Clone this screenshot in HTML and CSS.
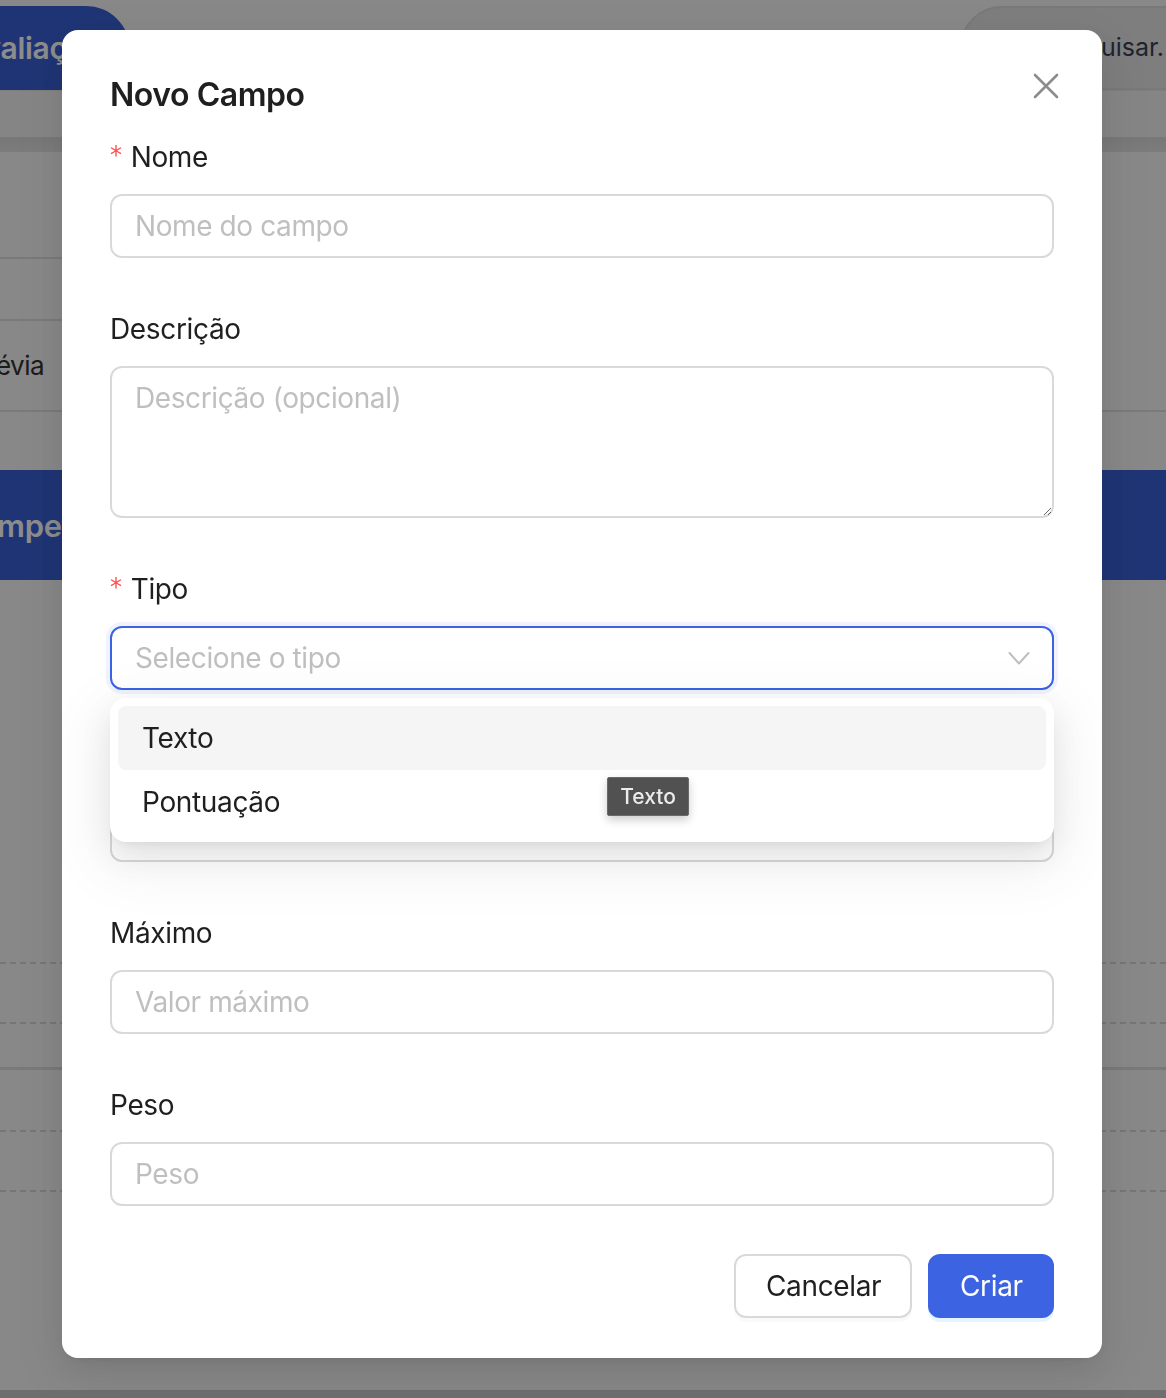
FILE: index.html
```html
<!DOCTYPE html>
<html lang="pt-BR">
<head>
<meta charset="utf-8">
<title>Novo Campo</title>
<link rel="stylesheet" href="styles.css">
</head>
<body>
<div class="app">
  <header class="topbar">
    <div class="tab">Avaliações</div>
    <div class="search">Pesquisar...</div>
  </header>
  <div class="subbar"></div>
  <div class="shadowband"></div>
  <section class="section1">
    <nav class="sidenav">
      <div class="nav-item nav-item-tall"></div>
      <div class="nav-item nav-item-short"></div>
      <div class="nav-item nav-item-text"><span class="nav-text">Prévia</span></div>
    </nav>
    <div class="section-main"></div>
  </section>
  <div class="band"><span class="band-text">Competências</span></div>
  <div class="table">
    <div class="trow trow-dashed"></div>
    <div class="trow trow-dashed trow-solid-bottom"></div>
    <div class="trow trow-dashed-top"></div>
    <div class="trow trow-dashed"></div>
    <div class="trow-fill"></div>
  </div>
  <div class="bottomstrip"></div>
</div>

<div class="mask"></div>

<div class="modal-wrap">
  <div class="modal">
    <button class="close" type="button" aria-label="Fechar">
      <svg width="26" height="26" viewBox="0 0 26 26"><path d="M2 2 L24 24 M24 2 L2 24" stroke="#8c8c8c" stroke-width="2.6" stroke-linecap="round" fill="none"/></svg>
    </button>
    <div class="modal-title">Novo Campo</div>
    <form class="form">
      <div class="field">
        <label class="label required">Nome</label>
        <input class="input" type="text" placeholder="Nome do campo">
      </div>
      <div class="field">
        <label class="label">Descrição</label>
        <textarea class="textarea" placeholder="Descrição (opcional)"></textarea>
      </div>
      <div class="field">
        <label class="label required">Tipo</label>
        <div class="select-wrap">
          <div class="select">
            <span class="select-ph">Selecione o tipo</span>
            <svg class="chevron" width="22" height="16" viewBox="0 0 22 16"><polyline points="1.5,3 11,13.5 20.5,3" fill="none" stroke="#bfbfbf" stroke-width="2" stroke-linecap="round" stroke-linejoin="round"/></svg>
          </div>
          <div class="dropdown">
            <div class="option option-active">Texto</div>
            <div class="option">Pontuação</div>
            <div class="tooltip">Texto</div>
          </div>
        </div>
      </div>
      <div class="field">
        <label class="label">Mínimo</label>
        <input class="input" type="text" placeholder="Valor mínimo">
      </div>
      <div class="field">
        <label class="label">Máximo</label>
        <input class="input" type="text" placeholder="Valor máximo">
      </div>
      <div class="field">
        <label class="label">Peso</label>
        <input class="input" type="text" placeholder="Peso">
      </div>
    </form>
    <div class="footer">
      <button class="btn btn-default" type="button">Cancelar</button>
      <button class="btn btn-primary" type="button">Criar</button>
    </div>
  </div>
</div>
</body>
</html>
```

FILE: styles.css
```css
* { box-sizing: border-box; }

html, body {
  margin: 0;
  height: 1398px;
  overflow: hidden;
}

body {
  font-family: Inter, "Noto Sans", "Liberation Sans", sans-serif;
  background: #f7f7f7;
  color: #1f1f1f;
}

/* ---------- background page ---------- */
.app {
  height: 1398px;
  display: flex;
  flex-direction: column;
  background: #f7f7f7;
  overflow: hidden;
}

.topbar {
  height: 90px;
  display: flex;
  justify-content: space-between;
  align-items: flex-end;
  flex-shrink: 0;
}

.tab {
  height: 84px;
  width: 196px;
  margin-left: -66px;
  padding-left: 30px;
  background: #3860d5;
  border-radius: 0 44px 0 0;
  color: #ffffff;
  font-size: 30px;
  font-weight: 600;
  letter-spacing: -0.3px;
  line-height: 84px;
  white-space: nowrap;
  overflow: hidden;
}

.search {
  height: 84px;
  width: 320px;
  margin-right: -114px;
  padding-left: 80px;
  background: #e6e6e6;
  border: 2px solid #dcdcdc;
  border-radius: 44px 0 0 44px;
  color: #374157;
  font-size: 25px;
  line-height: 78px;
  white-space: nowrap;
  overflow: hidden;
}

.subbar {
  height: 47px;
  flex-shrink: 0;
  background: #f3f3f3;
  border-top: 1px solid #e6e6e6;
}

.shadowband {
  height: 15px;
  flex-shrink: 0;
  background: linear-gradient(#dadada, #e2e2e2);
}

.section1 {
  height: 260px;
  flex-shrink: 0;
  display: grid;
  grid-template-columns: 340px 1fr;
  border-bottom: 2px solid #dedede;
}

.sidenav {
  display: flex;
  flex-direction: column;
}

.nav-item-tall {
  height: 107px;
  border-bottom: 2px solid #dedede;
}

.nav-item-short {
  height: 62px;
  border-bottom: 2px solid #dedede;
}

.nav-item-text {
  flex: 1;
  display: flex;
  align-items: center;
}

.nav-text {
  margin-left: -29px;
  font-size: 26px;
  letter-spacing: -0.5px;
  color: #333333;
}

.band {
  margin-top: 58px;
  height: 110px;
  flex-shrink: 0;
  background: #3860d5;
  display: flex;
  align-items: center;
}

.band-text {
  margin-left: -44px;
  font-size: 31px;
  font-weight: 600;
  letter-spacing: -0.3px;
  color: #ffffff;
}

.table {
  margin-top: 382px;
  flex: 1;
  display: flex;
  flex-direction: column;
}

.trow {
  height: 60px;
  flex-shrink: 0;
}

.trow-dashed {
  border-top: 2px dashed #d6d6d6;
}

.trow-solid-bottom {
  height: 48px;
  border-bottom: 3px solid #dcdcdc;
}

.trow-dashed-top {
  height: 60px;
}

.trow-dashed-top + .trow-dashed {
  height: 62px;
  border-bottom: 2px dashed #d6d6d6;
}

.trow-fill {
  flex: 1;
}

.bottomstrip {
  height: 8px;
  flex-shrink: 0;
  background: #c9c9c9;
}

/* ---------- overlay ---------- */
.mask {
  position: fixed;
  inset: 0;
  background: rgba(0, 0, 0, 0.45);
}

.modal-wrap {
  position: fixed;
  inset: 0;
  display: flex;
  justify-content: center;
  align-items: flex-start;
  padding-top: 30px;
  padding-right: 2px;
}

.modal {
  position: relative;
  width: 1040px;
  background: #ffffff;
  border-radius: 16px;
  padding: 40px 48px;
  box-shadow: 0 12px 32px 0 rgba(0, 0, 0, 0.08), 0 6px 12px -8px rgba(0, 0, 0, 0.12), 0 18px 56px 16px rgba(0, 0, 0, 0.05);
}

.close {
  position: absolute;
  top: 34px;
  right: 34px;
  width: 44px;
  height: 44px;
  padding: 0;
  border: 0;
  background: transparent;
  display: flex;
  align-items: center;
  justify-content: center;
  cursor: pointer;
}

.modal-title {
  font-size: 32px;
  font-weight: 600;
  letter-spacing: -0.45px;
  line-height: 48px;
  padding-top: 1px;
  color: #1f1f1f;
  margin-bottom: 15px;
}

.form {
  display: flex;
  flex-direction: column;
}

.field {
  display: flex;
  flex-direction: column;
  margin-bottom: 48px;
}

.label {
  display: block;
  font-size: 28px;
  letter-spacing: -0.35px;
  line-height: 44px;
  padding-top: 1px;
  padding-bottom: 15px;
  color: #1f1f1f;
}

.label.required::before {
  content: "*";
  display: inline-block;
  color: #ff4d4f;
  margin-right: 9px;
  vertical-align: top;
  line-height: 40px;
  font-family: "DejaVu Sans", sans-serif;
  font-size: 24px;
}

.input,
.textarea,
.select {
  width: 100%;
  font-family: Inter, "Noto Sans", sans-serif;
  font-size: 28px;
  letter-spacing: -0.4px;
  color: #1f1f1f;
  background: #ffffff;
  border: 2px solid #d9d9d9;
  border-radius: 12px;
  outline: none;
}

.input {
  height: 64px;
  padding: 0 23px;
  line-height: 44px;
}

.textarea {
  display: block;
  height: 152px;
  padding: 8px 23px;
  line-height: 44px;
  resize: vertical;
}

.input::placeholder,
.textarea::placeholder {
  color: #bfbfbf;
}

.select-wrap {
  position: relative;
}

.select {
  height: 64px;
  padding: 0 22px 0 23px;
  display: flex;
  align-items: center;
  justify-content: space-between;
  border-color: #3b63e2;
  box-shadow: 0 0 0 4px rgba(59, 99, 226, 0.08);
}

.select-ph {
  color: #bfbfbf;
  line-height: 44px;
}

.dropdown {
  position: absolute;
  top: calc(100% + 8px);
  left: 0;
  right: 0;
  z-index: 5;
  background: #ffffff;
  border-radius: 16px;
  padding: 8px;
  box-shadow: 0 12px 32px 0 rgba(0, 0, 0, 0.08), 0 6px 12px -8px rgba(0, 0, 0, 0.12), 0 18px 56px 16px rgba(0, 0, 0, 0.05);
}

.option {
  height: 64px;
  padding: 0 24px;
  border-radius: 8px;
  display: flex;
  align-items: center;
  font-size: 28px;
  letter-spacing: -0.35px;
  color: #1f1f1f;
}

.option-active {
  background: #f5f5f5;
}

.tooltip {
  position: absolute;
  left: 497px;
  top: 79px;
  width: 82px;
  height: 39px;
  background: #505150;
  border: 1px solid #6a6a6a;
  border-radius: 2px;
  color: #ececec;
  font-size: 21px;
  font-weight: 500;
  display: flex;
  align-items: center;
  justify-content: center;
  box-shadow: 0 4px 10px rgba(0, 0, 0, 0.2);
}

.footer {
  display: flex;
  justify-content: flex-end;
  gap: 16px;
}

.btn {
  height: 64px;
  padding: 0 30px;
  border-radius: 12px;
  font-family: Inter, "Noto Sans", sans-serif;
  font-size: 28px;
  letter-spacing: -0.35px;
  cursor: pointer;
}

.btn-default {
  width: 178px;
  background: #ffffff;
  border: 2px solid #d9d9d9;
  color: #1f1f1f;
  box-shadow: 0 4px 0 rgba(0, 0, 0, 0.02);
}

.btn-primary {
  width: 126px;
  background: #3b63e2;
  border: 2px solid #3b63e2;
  color: #ffffff;
  box-shadow: 0 4px 0 rgba(5, 145, 255, 0.1);
}
```
